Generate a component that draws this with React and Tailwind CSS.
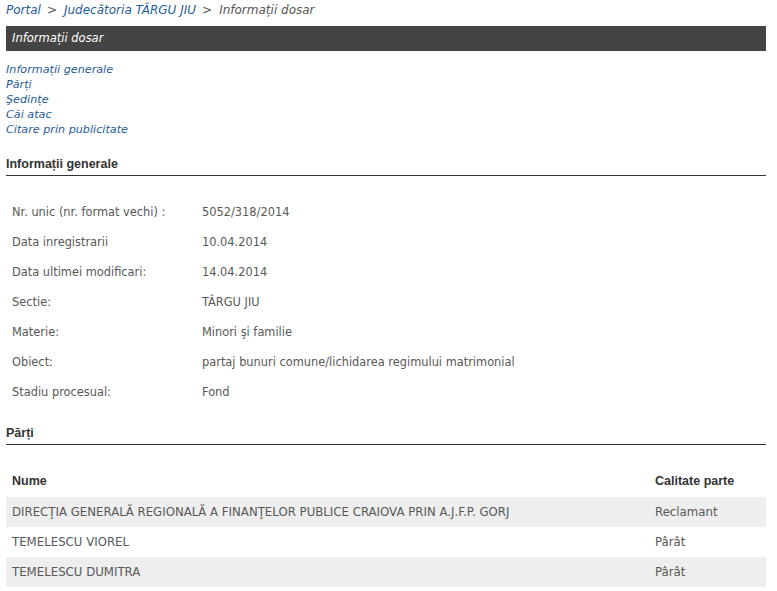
const general = [
  ['Nr. unic (nr. format vechi) :', '5052/318/2014'],
  ['Data inregistrarii', '10.04.2014'],
  ['Data ultimei modificari:', '14.04.2014'],
  ['Sectie:', 'TÂRGU JIU'],
  ['Materie:', 'Minori şi familie'],
  ['Obiect:', 'partaj bunuri comune/lichidarea regimului matrimonial'],
  ['Stadiu procesual:', 'Fond'],
];

const parti = [
  ['DIRECŢIA GENERALĂ REGIONALĂ A FINANŢELOR PUBLICE CRAIOVA PRIN A.J.F.P. GORJ', 'Reclamant'],
  ['TEMELESCU VIOREL', 'Pârât'],
  ['TEMELESCU DUMITRA', 'Pârât'],
];

const links = ['Informații generale', 'Părți', 'Şedințe', 'Căi atac', 'Citare prin publicitate'];

const SectionTitle = ({ children }) => (
  <div className="border-b border-[#333] pb-[3px] font-['Liberation_Sans',sans-serif] text-[12.5px] font-bold leading-[15px] text-[#333]">
    {children}
  </div>
);

export default function App() {
  return (
    <div className="min-h-[591px] bg-white pl-[6px] pr-[11px] pt-[3px] font-['DejaVu_Sans',sans-serif] text-[11.4px]">
      <div className="h-[23px] text-[12px] italic leading-[15px] text-[#555]">
        <a href="#" className="text-[#1f5c9a]">Portal</a>
        <span className="ml-[6px] mr-[7px]">&gt;</span>
        <a href="#" className="text-[#1f5c9a]">Judecătoria TÂRGU JIU</a>
        <span className="ml-[6px] mr-[7px]">&gt;</span>
        <span>Informații dosar</span>
      </div>

      <div className="flex h-[25px] items-center bg-[#444] px-[6px] text-[11.5px] italic text-white">
        Informații dosar
      </div>

      <div className="mt-[11px] flex flex-col text-[11.2px] italic leading-[15px] text-[#1f5c9a]">
        {links.map((l) => (
          <a key={l} href="#">{l}</a>
        ))}
      </div>

      <div className="mt-[20px]">
        <SectionTitle>Informații generale</SectionTitle>
      </div>

      <div className="mt-[22px] flex flex-col text-[#585858]">
        {general.map(([k, v]) => (
          <div key={k} className="flex h-[30px] items-center px-[6px]">
            <div className="w-[190px]">{k}</div>
            <div>{v}</div>
          </div>
        ))}
      </div>

      <div className="mt-[18px]">
        <SectionTitle>Părți</SectionTitle>
      </div>

      <table className="mt-[21px] w-full border-collapse text-[#585858]">
        <thead>
          <tr className="h-[31px] text-left font-['Liberation_Sans',sans-serif] text-[12.5px] font-bold text-[#333]">
            <th className="px-[6px]">Nume</th>
            <th className="w-[111px] px-0">Calitate parte</th>
          </tr>
        </thead>
        <tbody className="text-[11.75px]">
          {parti.map(([n, c], i) => (
            <tr key={n} className={i % 2 === 0 ? 'h-[30px] bg-[#eee]' : 'h-[30px]'}>
              <td className="px-[6px] pt-[2px]">{n}</td>
              <td className="pt-[2px]">{c}</td>
            </tr>
          ))}
        </tbody>
      </table>
    </div>
  );
}
